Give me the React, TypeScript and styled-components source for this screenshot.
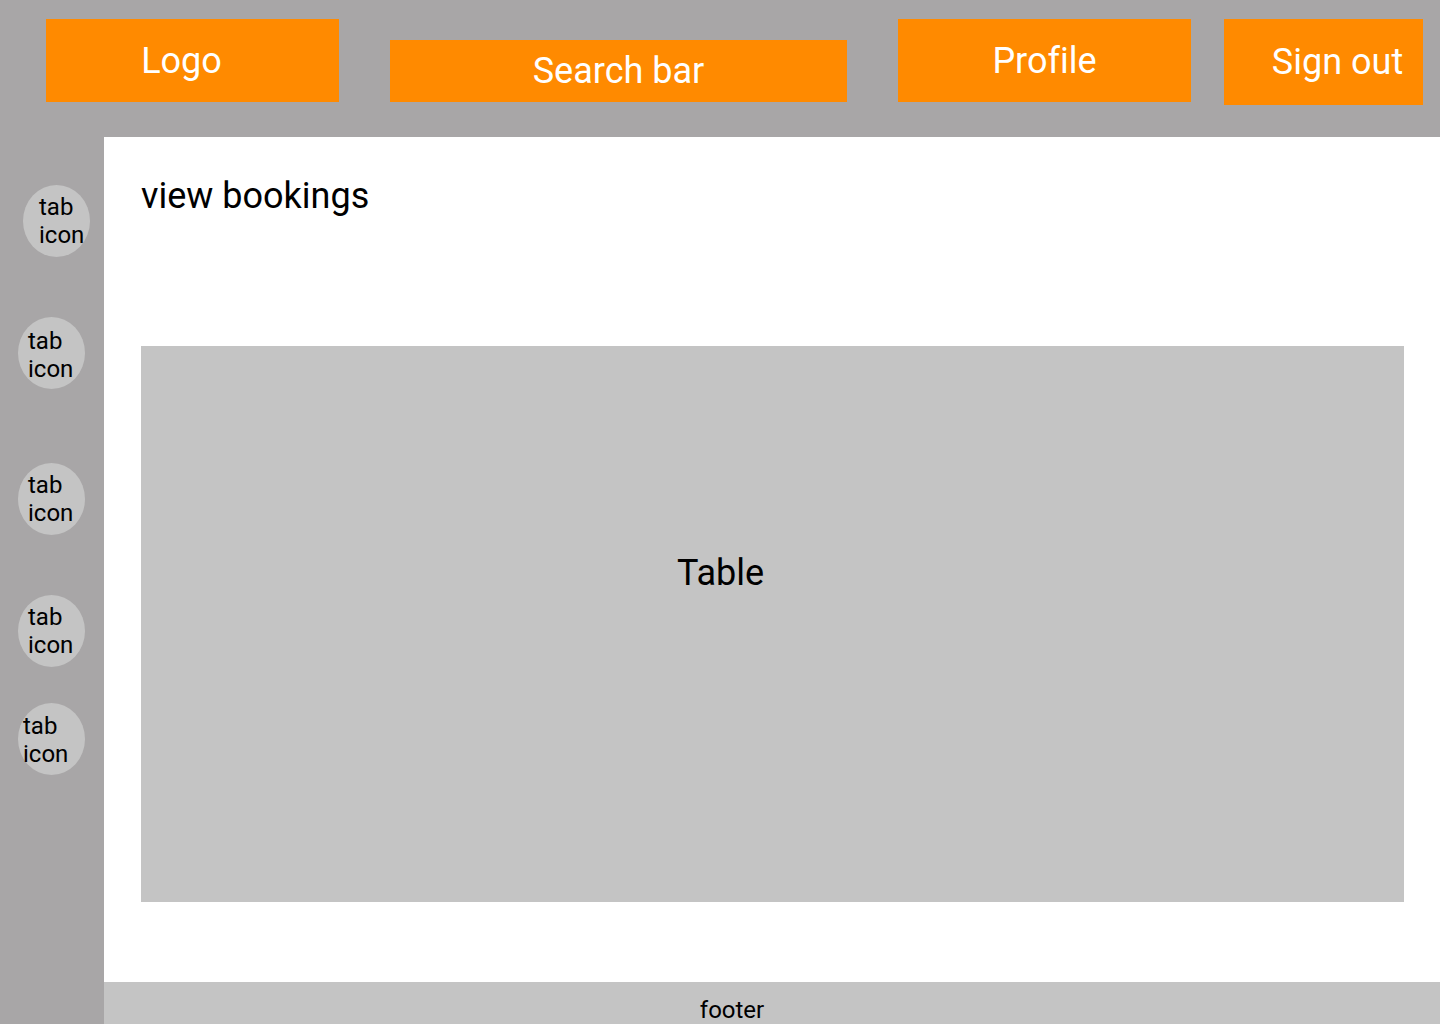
import React from 'react';
import styled, { createGlobalStyle } from 'styled-components';

const GlobalStyle = createGlobalStyle`
  html, body {
    margin: 0;
    padding: 0;
    background: #ffffff;
    font-family: Roboto, "Liberation Sans", sans-serif;
    font-variant-ligatures: none;
  }
`;

const Page = styled.div`
  display: flex;
  flex-direction: column;
  width: 1440px;
  height: 1024px;
  overflow: hidden;
`;

const TopBar = styled.header`
  display: flex;
  align-items: flex-start;
  height: 137px;
  flex-shrink: 0;
  padding-left: 46px;
  box-sizing: border-box;
  background-color: #a8a6a7;
`;

const NavBox = styled.div<{ $width: number; $top: number; $height: number; $gap: number; $shift: number }>`
  display: flex;
  align-items: center;
  justify-content: center;
  width: ${(p) => p.$width}px;
  height: ${(p) => p.$height}px;
  margin-top: ${(p) => p.$top}px;
  margin-right: ${(p) => p.$gap}px;
  padding-left: ${(p) => (p.$shift > 0 ? p.$shift * 2 : 0)}px;
  padding-right: ${(p) => (p.$shift < 0 ? -p.$shift * 2 : 0)}px;
  box-sizing: border-box;
  flex-shrink: 0;
  background-color: #ff8a00;
  color: #ffffff;
  font-size: 36px;
  line-height: 42px;
`;

const Body = styled.div`
  display: flex;
  flex: 1;
  min-height: 0;
`;

const Sidebar = styled.nav`
  display: flex;
  flex-direction: column;
  width: 104px;
  flex-shrink: 0;
  background-color: #a8a6a7;
`;

const TabIcon = styled.div<{ $top: number; $left: number; $indent: number; $dy: number }>`
  display: flex;
  flex-direction: column;
  justify-content: center;
  width: 67px;
  height: 72px;
  margin-top: ${(p) => p.$top}px;
  margin-left: ${(p) => p.$left}px;
  padding-left: ${(p) => p.$indent}px;
  padding-top: ${(p) => p.$dy * 2}px;
  box-sizing: border-box;
  border-radius: 50%;
  background-color: #c4c4c4;
  color: #000000;
  font-size: 24px;
  line-height: 28px;
  white-space: nowrap;
`;

const MainColumn = styled.div`
  display: flex;
  flex-direction: column;
  flex: 1;
  min-width: 0;
`;

const Content = styled.main`
  flex: 1;
  padding: 38px 36px 0 37px;
  background-color: #ffffff;
`;

const Title = styled.h1`
  margin: 0;
  font-size: 36px;
  font-weight: 400;
  line-height: 42px;
  color: #000000;
`;

const TablePlaceholder = styled.div`
  height: 556px;
  margin-top: 129px;
  padding: 206px 0 0 536px;
  box-sizing: border-box;
  background-color: #c4c4c4;
  color: #000000;
  font-size: 36px;
  line-height: 42px;
`;

const Footer = styled.footer`
  height: 42px;
  flex-shrink: 0;
  padding: 14px 80px 0 0;
  box-sizing: border-box;
  background-color: #c4c4c4;
  color: #000000;
  font-size: 24px;
  line-height: 28px;
  text-align: center;
`;

const navItems = [
  { label: 'Logo', width: 293, height: 83, top: 19, gap: 51, shift: -11 },
  { label: 'Search bar', width: 457, height: 62, top: 40, gap: 51, shift: 0 },
  { label: 'Profile', width: 293, height: 83, top: 19, gap: 33, shift: 0 },
  { label: 'Sign out', width: 199, height: 86, top: 19, gap: 0, shift: 14 },
];

const tabs = [
  { top: 48, left: 23, indent: 16, dy: 0 },
  { top: 60, left: 18, indent: 10, dy: 2 },
  { top: 74, left: 18, indent: 10, dy: 0 },
  { top: 60, left: 18, indent: 10, dy: 0 },
  { top: 36, left: 18, indent: 5, dy: 1 },
];

const App = () => {
  return (
    <Page>
      <GlobalStyle />
      <TopBar>
        {navItems.map((item) => (
          <NavBox
            key={item.label}
            $width={item.width}
            $height={item.height}
            $top={item.top}
            $gap={item.gap}
            $shift={item.shift}
          >
            {item.label}
          </NavBox>
        ))}
      </TopBar>
      <Body>
        <Sidebar>
          {tabs.map((tab, i) => (
            <TabIcon key={i} $top={tab.top} $left={tab.left} $indent={tab.indent} $dy={tab.dy}>
              <span>tab</span>
              <span>icon</span>
            </TabIcon>
          ))}
        </Sidebar>
        <MainColumn>
          <Content>
            <Title>view bookings</Title>
            <TablePlaceholder>Table</TablePlaceholder>
          </Content>
          <Footer>footer</Footer>
        </MainColumn>
      </Body>
    </Page>
  );
};

export default App;
